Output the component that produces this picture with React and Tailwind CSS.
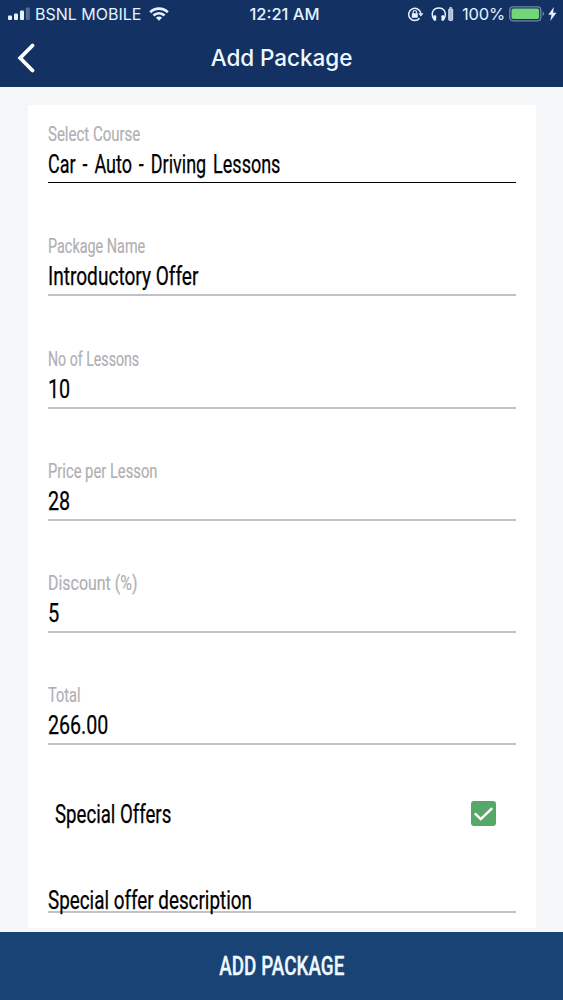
import { useState } from 'react';

// Form rows, with the horizontal squeeze that gives each text its condensed look
const fields = [
  { id: 'course', label: 'Select Course', value: 'Car - Auto - Driving Lessons', labelFit: 'scale-x-[0.75]', fit: 'scale-x-[0.72] [word-spacing:3.4px]', active: true },
  { id: 'name', label: 'Package Name', value: 'Introductory Offer', labelFit: 'scale-x-[0.72]', fit: 'scale-x-[0.763]' },
  { id: 'lessons', label: 'No of Lessons', value: '10', labelFit: 'scale-x-[0.708]', fit: 'scale-x-[0.79]' },
  { id: 'price', label: 'Price per Lesson', value: '28', labelFit: 'scale-x-[0.738]', fit: 'scale-x-[0.79]' },
  { id: 'discount', label: 'Discount (%)', value: '5', labelFit: 'scale-x-[0.797]', fit: 'scale-x-[0.8]' },
  { id: 'total', label: 'Total', value: '266.00', labelFit: 'scale-x-[0.73]', fit: 'scale-x-[0.785]' },
];

const StatusBar = () => (
  <div className="grid h-7 grid-cols-[1fr_auto_1fr] items-center pl-2 pr-1.5 text-[16.5px] text-[#e4f3ff]">
    <div className="flex items-center">
      <svg width="22" height="14" viewBox="0 0 22 14" fill="currentColor">
        <rect x="0" y="8.5" width="4" height="4.5" rx="1" />
        <rect x="6" y="6.5" width="4" height="6.5" rx="1" />
        <rect x="12" y="3.5" width="4" height="9.5" rx="1" />
        <rect x="17.8" y="0.5" width="4" height="12.5" rx="1" opacity="0.3" />
      </svg>
      <span className="ml-[5px] whitespace-nowrap text-[16px]">BSNL MOBILE</span>
      <svg className="ml-2" width="20" height="14" viewBox="0 0 20 14" fill="none" stroke="currentColor" strokeWidth="2.7">
        <path d="M1.2 5.2a12.4 12.4 0 0 1 17.6 0" />
        <path d="M4.5 8.5a7.8 7.8 0 0 1 11 0" />
        <path d="M10 13.8 6.9 10.8a4.4 4.4 0 0 1 6.2 0z" fill="currentColor" stroke="none" />
      </svg>
    </div>
    <span className="relative left-0.5 text-[16.5px] font-medium">12:21 AM</span>
    <div className="flex items-center justify-end">
      <svg width="17" height="15" viewBox="0 0 17 15" fill="none" stroke="currentColor" strokeWidth="1.5">
        <path d="M12.6 11.2A6.1 6.1 0 1 1 13.8 6.2" />
        <path d="M11.3 6.2h5.2l-2.6 3.2z" fill="currentColor" stroke="none" />
        <rect x="4.8" y="6.2" width="6" height="4.6" rx="0.6" fill="currentColor" stroke="none" />
        <path d="M6.1 6.6V5.2a1.7 1.7 0 0 1 3.4 0v1.4" strokeWidth="1.2" />
      </svg>
      <svg className="ml-[7px]" width="23" height="14" viewBox="0 0 23 14" fill="none" stroke="currentColor">
        <path d="M2.8 12.2C-.6 6.5 2 1 7.8 1s8.4 5.5 5 11.2" strokeWidth="1.5" />
        <rect x="2.4" y="8.2" width="2.8" height="5.5" rx="1" fill="currentColor" stroke="none" />
        <rect x="10.4" y="8.2" width="2.8" height="5.5" rx="1" fill="currentColor" stroke="none" />
        <rect x="17.7" y="1.7" width="4" height="11.8" rx="0.9" fill="currentColor" fillOpacity="0.75" strokeWidth="0.8" />
        <path d="M18.7.6h2" />
      </svg>
      <span className="ml-2 tracking-[-0.2px]">100%</span>
      <svg className="ml-1" width="36" height="16" viewBox="0 0 36 16">
        <rect x="0.8" y="0.8" width="31" height="14" rx="3.2" fill="none" stroke="#7088ad" strokeWidth="1.3" />
        <rect x="2.5" y="2.5" width="27.6" height="10.6" rx="1.8" fill="#70d678" />
        <path d="M33.6 5.3q3 2.5 0 5z" fill="#7088ad" />
      </svg>
      <svg className="ml-[3px]" width="9" height="14" viewBox="0 0 9 14" fill="currentColor">
        <path d="M5.9 0 .3 7.8h3.2L2.3 14l6.2-8.3H5.1z" />
      </svg>
    </div>
  </div>
);

const Field = ({ label, value, labelFit, fit, active }) => (
  <div className="flex h-[112.3px] flex-col whitespace-nowrap">
    <span className={`origin-left self-start text-[20px] leading-7 text-[#b0b0b3] [-webkit-text-stroke:0.2px] ${labelFit}`}>{label}</span>
    <div className={`flex items-center ${active ? 'h-[35px] border-b border-black' : 'h-[36px] border-b-2 border-[#c2c2c4]'}`}>
      <span className={`origin-left text-[25px] leading-8 text-black [-webkit-text-stroke:0.25px] ${fit}`}>{value}</span>
    </div>
  </div>
);

const App = () => {
  const [special, setSpecial] = useState(true);

  return (
    <div className="flex h-[1000px] w-full flex-col overflow-hidden bg-[#f5f6f8] font-['Roboto',sans-serif]">
      <header className="h-[87px] shrink-0 bg-[#143163] font-['Inter',sans-serif]">
        <StatusBar />
        <div className="grid h-[59px] grid-cols-[1fr_auto_1fr] items-center">
          <button className="ml-4 w-6" aria-label="Back">
            <svg width="20" height="30" viewBox="0 0 20 30" fill="none" stroke="#fff" strokeWidth="3.8" strokeLinecap="round" strokeLinejoin="miter">
              <path d="M16.5 2.5 4.2 15l12.3 12.5" />
            </svg>
          </button>
          <h1 className="text-[22.5px] font-medium tracking-[-0.05px] text-[#eef9ff]">Add Package</h1>
        </div>
      </header>

      <main className="min-h-0 flex-1 overflow-hidden px-7 pt-[18px]">
        <div className="mr-[-1px] h-[823px] bg-white pl-5 pr-5 pt-[15px]">
          {fields.map((field) => (
            <Field key={field.id} {...field} />
          ))}

          <div className="mt-[-8px] flex h-14 items-center justify-between pl-[7px] pr-5">
            <span className="origin-left scale-x-[0.745] pt-0.5 text-[25px] [-webkit-text-stroke:0.25px]">Special Offers</span>
            <button
              className="flex size-[25px] items-center justify-center rounded-[3px] bg-[#55a868]"
              onClick={() => setSpecial(!special)}
              aria-label="Toggle"
            >
              {special && (
                <svg width="25" height="25" viewBox="0 0 25 25" fill="none" stroke="#fff" strokeWidth="2.5">
                  <path d="m3.8 12.3 6 5.8L21.2 7.2" />
                </svg>
              )}
            </button>
          </div>

          <div className="mt-[46px] flex h-[25px] items-center whitespace-nowrap border-b-2 border-[#c2c2c4]">
            <span className="origin-left scale-x-[0.753] pt-0.5 text-[25px] [-webkit-text-stroke:0.25px]">Special offer description</span>
          </div>
        </div>
      </main>

      <footer className="flex h-[68px] shrink-0 items-center justify-center bg-[#194375]">
        <button className="scale-x-[0.755] whitespace-nowrap pt-0.5 text-[25px] font-medium text-[#eef9ff] [-webkit-text-stroke:0.3px]">ADD PACKAGE</button>
      </footer>
    </div>
  );
};

export default App;
